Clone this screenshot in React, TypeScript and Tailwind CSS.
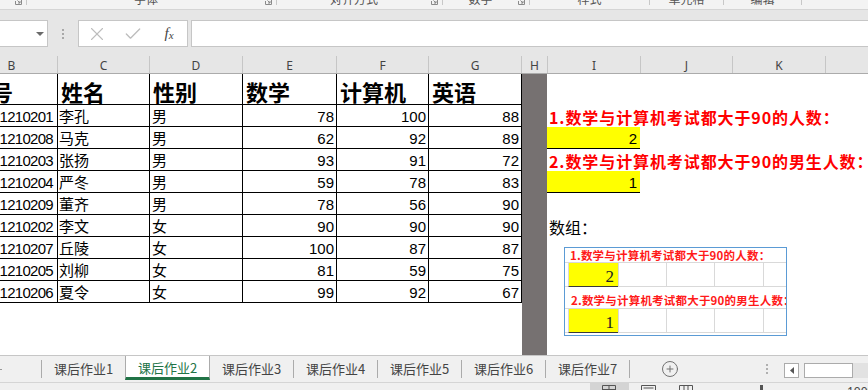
import { X, Check, CirclePlus } from 'lucide-react';

const rows: [string, string, string, number, number, number][] = [
  ['1210201', '李孔', '男', 78, 100, 88],
  ['1210208', '马克', '男', 62, 92, 89],
  ['1210203', '张扬', '男', 93, 91, 72],
  ['1210204', '严冬', '男', 59, 78, 83],
  ['1210209', '董齐', '男', 78, 56, 90],
  ['1210202', '李文', '女', 90, 90, 90],
  ['1210207', '丘陵', '女', 100, 87, 87],
  ['1210205', '刘柳', '女', 81, 59, 75],
  ['1210206', '夏令', '女', 99, 92, 67],
];

function Launcher() {
  return (
    <svg width="7" height="7" viewBox="0 0 7 7" className="flex-none -mt-[2px] mr-[4px]">
      <path d="M0.5 3V6.5H6.5V0.5H3" stroke="#8a8a8a" fill="none" />
      <path d="M2.5 2.5L5 5M5 3V5H3" stroke="#8a8a8a" fill="none" />
    </svg>
  );
}

function RSep() {
  return <div className="flex-none w-px h-[5px] bg-[#c8c8c8]" />;
}

function RSeg({ cls, label, launcher }: { cls: string; label?: string; launcher?: boolean }) {
  return (
    <div className={`flex-none flex items-start ${cls}`}>
      <div className="flex-1 text-center -mt-[7px] leading-[12px] text-[12px] text-[#555] whitespace-nowrap">{label ?? ''}</div>
      {launcher ? <Launcher /> : null}
    </div>
  );
}

function Ribbon() {
  return (
    <div className="h-[10px] flex-none bg-[#f3f3f3] border-b border-[#d5d5d5] flex items-start overflow-hidden">
      <RSeg cls="w-[26px]" launcher />
      <RSep />
      <RSeg cls="w-[249px]" label="字体" launcher />
      <RSep />
      <RSeg cls="w-[165px]" label="对齐方式" launcher />
      <RSep />
      <RSeg cls="w-[86px]" label="数字" launcher />
      <RSep />
      <RSeg cls="w-[119px]" label="样式" />
      <RSep />
      <RSeg cls="w-[73px]" label="单元格" />
      <RSep />
      <RSeg cls="w-[77px]" label="编辑" />
      <RSep />
    </div>
  );
}

function FormulaBar() {
  return (
    <div className="h-[46px] flex-none bg-[#e6e6e6] pt-[10px]">
      <div className="h-[27px] flex">
        <div className="flex-none w-[48px] bg-white border border-l-0 border-[#c6c6c6] flex items-center justify-end pr-[3px]">
          <svg width="8" height="4" viewBox="0 0 8 4">
            <path d="M0 0H8L4 4Z" fill="#6a6a6a" />
          </svg>
        </div>
        <div className="flex-none w-[30px] flex flex-col items-center justify-center gap-[2px]">
          <div className="w-[2px] h-[2px] bg-[#a8a8a8]" />
          <div className="w-[2px] h-[2px] bg-[#a8a8a8]" />
          <div className="w-[2px] h-[2px] bg-[#a8a8a8]" />
        </div>
        <div className="flex-none w-[110px] bg-white border border-[#c6c6c6] flex items-center">
          <div className="w-[36px] flex justify-center">
            <X size={22} strokeWidth={1.2} color="#bdbdbd" />
          </div>
          <div className="w-[36px] flex justify-center">
            <Check size={20} strokeWidth={1.6} color="#bdbdbd" />
          </div>
          <div className="w-[36px] flex justify-center font-['Liberation_Serif',serif] italic text-[15px] text-[#444] leading-none">
            <span>f</span>
            <span className="text-[11px] mt-[4px]">x</span>
          </div>
        </div>
        <div className="flex-none w-[3px]" />
        <div className="flex-1 bg-white border border-r-0 border-[#c6c6c6]" />
      </div>
    </div>
  );
}

function CH({ cls, l }: { cls: string; l: string }) {
  return (
    <div className={`flex-none h-full border-r border-[#c6c6c6] flex items-center justify-center pt-[2px] leading-none ${cls}`}>
      {l}
    </div>
  );
}

function ColumnHeaders() {
  return (
    <div className="h-[18px] flex-none bg-[#e6e6e6] border-b border-[#ababab] flex overflow-hidden text-[12px] text-[#444] font-['Noto_Sans',sans-serif]">
      <CH cls="w-[92px] -ml-[34px]" l="B" />
      <CH cls="w-[92px]" l="C" />
      <CH cls="w-[93px]" l="D" />
      <CH cls="w-[94px]" l="E" />
      <CH cls="w-[92px]" l="F" />
      <CH cls="w-[93px]" l="G" />
      <CH cls="w-[26px]" l="H" />
      <CH cls="w-[93px]" l="I" />
      <CH cls="w-[92px]" l="J" />
      <CH cls="w-[93px]" l="K" />
      <div className="flex-1" />
    </div>
  );
}

function HeadCell({ cls, t }: { cls: string; t: string }) {
  return (
    <div className={`flex-none h-[31px] border-r border-b border-black flex items-end pl-[3px] text-[22px] font-bold leading-[26px] whitespace-nowrap overflow-hidden ${cls}`}>
      {t}
    </div>
  );
}

function TextCell({ cls, t }: { cls: string; t: string }) {
  return (
    <div className={`flex-none h-[22px] border-r border-b border-black flex items-end pl-[1px] text-[15px] leading-[20px] whitespace-nowrap overflow-hidden ${cls}`}>
      {t}
    </div>
  );
}

function NumCell({ cls, t }: { cls: string; t: string | number }) {
  return (
    <div className={`flex-none h-[22px] border-r border-b border-black flex items-end justify-end pr-[2px] font-['Liberation_Sans',sans-serif] text-[15px] leading-[18px] whitespace-nowrap overflow-hidden ${cls}`}>
      {t}
    </div>
  );
}

function DataTable() {
  return (
    <div className="flex-none w-[522px] flex flex-col overflow-hidden">
      <div className="flex">
        <HeadCell cls="w-[92px] -ml-[34px]" t="学号" />
        <HeadCell cls="w-[92px]" t="姓名" />
        <HeadCell cls="w-[93px]" t="性别" />
        <HeadCell cls="w-[94px]" t="数学" />
        <HeadCell cls="w-[92px]" t="计算机" />
        <HeadCell cls="w-[93px]" t="英语" />
      </div>
      {rows.map((r) => (
        <div className="flex" key={r[0]}>
          <NumCell cls="w-[92px] -ml-[34px] pr-[4px] tracking-[-0.7px]" t={r[0]} />
          <TextCell cls="w-[92px]" t={r[1]} />
          <TextCell cls="w-[93px] pl-[2px]" t={r[2]} />
          <NumCell cls="w-[94px]" t={r[3]} />
          <NumCell cls="w-[92px]" t={r[4]} />
          <NumCell cls="w-[93px]" t={r[5]} />
        </div>
      ))}
    </div>
  );
}

function RedLabel({ t }: { t: string }) {
  return (
    <div className="h-[22px] flex items-end pl-[2px] text-[16px] font-bold text-[#ff0000] leading-[20px] tracking-[0.9px] whitespace-nowrap">
      {t}
    </div>
  );
}

function YellowCell({ v }: { v: string }) {
  return (
    <div className="h-[22px] flex">
      <div className="flex-none w-[93px] h-[22px] bg-[#ffff00] border-b border-black flex items-end justify-end pr-[3px] font-['Liberation_Sans',sans-serif] text-[15px] leading-[18px]">
        {v}
      </div>
    </div>
  );
}

function PicValueRow({ v }: { v: string }) {
  return (
    <div className="h-[25px] flex border-t border-[#d9d9d9]">
      <div className="flex-none w-[3px] border-b border-[#d9d9d9]" />
      <div className="flex-none w-[50px] bg-[#ffff00] border-l border-l-[#d9d9d9] border-b border-b-[#3a3a3a] flex items-end justify-end pr-[4px] font-['Liberation_Serif',serif] text-[17px] leading-[18px] text-[#222]">
        {v}
      </div>
      <div className="flex-none w-[48px] border-l border-b border-[#d9d9d9]" />
      <div className="flex-none w-[48px] border-l border-b border-[#d9d9d9]" />
      <div className="flex-none w-[49px] border-l border-b border-[#d9d9d9]" />
      <div className="flex-1 border-l border-b border-[#d9d9d9]" />
    </div>
  );
}

function Picture() {
  return (
    <div className="ml-[17px] mt-[10px] w-[223px] h-[89px] flex-none border border-[#5b9bd5] bg-white flex flex-col overflow-hidden">
      <div className="h-[14px] flex-none pl-[5px] pt-[1px] text-[11.5px] font-bold text-[#ff1a1a] leading-[13px] tracking-[0.2px] whitespace-nowrap">
        1.数学与计算机考试都大于90的人数：
      </div>
      <PicValueRow v="2" />
      <div className="h-[21px] flex-none flex items-end pl-[6px] pb-[1px] text-[11.5px] font-bold text-[#ff1a1a] leading-[13px] tracking-[0.2px] whitespace-nowrap">
        2.数学与计算机考试都大于90的男生人数：
      </div>
      <PicValueRow v="1" />
    </div>
  );
}

function RightArea() {
  return (
    <div className="flex-1 flex flex-col overflow-hidden">
      <div className="h-[31px] flex-none" />
      <RedLabel t="1.数学与计算机考试都大于90的人数：" />
      <YellowCell v="2" />
      <RedLabel t="2.数学与计算机考试都大于90的男生人数：" />
      <YellowCell v="1" />
      <div className="h-[22px] flex-none" />
      <div className="h-[22px] flex-none flex items-end pl-[2px] text-[16px] leading-[20px]">数组：</div>
      <Picture />
    </div>
  );
}

function SheetBody() {
  return (
    <div className="h-[281px] flex-none flex bg-white overflow-hidden">
      <DataTable />
      <div className="flex-none w-[25px] bg-[#767171]" />
      <RightArea />
    </div>
  );
}

function TabSep() {
  return <div className="flex-none w-px h-[18px] mt-[4px] bg-[#ababab]" />;
}

function Tab({ label }: { label: string }) {
  return (
    <div className="flex-none w-[83px] h-[24px] flex items-center justify-center text-[13px] text-[#444] leading-none">
      {label}
    </div>
  );
}

function TabBar() {
  return (
    <div className="h-[27px] flex-none border-t border-[#c6c6c6] bg-[#f0f0f0] flex items-start">
      <div className="flex-none w-[41px] h-[24px] flex items-center">
        <div className="w-[2px] h-[1px] bg-[#999] mt-[2px]" />
      </div>
      <TabSep />
      <Tab label="课后作业1" />
      <div className="flex-none w-[85px] h-[24px] bg-white border-x border-[#ababab] border-b-[3px] border-b-[#217346] flex items-center justify-center pt-[1px] text-[13px] text-[#217346] leading-none">
        课后作业2
      </div>
      <Tab label="课后作业3" />
      <TabSep />
      <Tab label="课后作业4" />
      <TabSep />
      <Tab label="课后作业5" />
      <TabSep />
      <Tab label="课后作业6" />
      <TabSep />
      <Tab label="课后作业7" />
      <TabSep />
      <div className="flex-none w-[31px]" />
      <div className="flex-none w-[18px] h-[18px] mt-[4px]">
        <CirclePlus size={18} strokeWidth={1.3} color="#6f6f6f" />
      </div>
      <div className="flex-none w-[87px]" />
      <div className="flex-none w-[2px] mt-[8px] flex flex-col gap-[2px]">
        <div className="w-[2px] h-[2px] bg-[#b0b0b0]" />
        <div className="w-[2px] h-[2px] bg-[#b0b0b0]" />
        <div className="w-[2px] h-[2px] bg-[#b0b0b0]" />
      </div>
      <div className="flex-none w-[16px]" />
      <div className="flex-none w-[15px] h-[15px] mt-[7px] bg-white border border-[#ababab] flex items-center justify-center">
        <svg width="4" height="7" viewBox="0 0 4 7">
          <path d="M4 0V7L0 3.5Z" fill="#555" />
        </svg>
      </div>
      <div className="flex-none w-[5px]" />
      <div className="flex-none w-[49px] h-[15px] mt-[7px] bg-white border border-[#ababab]" />
      <div className="flex-1 h-[15px] mt-[7px] bg-[#e2e2e2]" />
    </div>
  );
}

function StatusBar() {
  return (
    <div className="h-[8px] flex-none border-t border-[#d5d5d5] bg-[#f0f0f0] flex items-start overflow-hidden">
      <div className="flex-none w-[590px]" />
      <div className="flex-none w-[39px] h-[8px] bg-[#d4d4d4] pl-[12px] pt-[2px]">
        <svg width="14" height="8" viewBox="0 0 14 8">
          <path d="M0.5 8V0.5H13.5V8M7 0.5V8M0.5 4.5H13.5" stroke="#555" fill="none" />
        </svg>
      </div>
      <div className="flex-none w-[12px]" />
      <div className="flex-none w-[15px] pt-[2px]">
        <svg width="15" height="8" viewBox="0 0 15 8">
          <path d="M0.5 8V0.5H14.5V8M2.5 3H12.5" stroke="#555" fill="none" />
        </svg>
      </div>
      <div className="flex-none w-[23px]" />
      <div className="flex-none w-[14px] pt-[2px]">
        <svg width="14" height="8" viewBox="0 0 14 8">
          <path d="M0.5 8V0.5H13.5V8M5 0.5V8M9 0.5V8" stroke="#555" fill="none" />
        </svg>
      </div>
      <div className="flex-none w-[67px]" />
      <div className="flex-none w-[3px] h-[5px] mt-[2px] bg-[#555]" />
      <div className="flex-none w-[84px]" />
      <div className="flex-none text-[12px] leading-[12px] text-[#444] mt-[3px] font-['Noto_Sans',sans-serif]">100%</div>
    </div>
  );
}

export default function App() {
  return (
    <div className="w-[868px] h-[390px] overflow-hidden flex flex-col bg-white text-black font-['Noto_Sans_CJK_SC',sans-serif]">
      <Ribbon />
      <FormulaBar />
      <ColumnHeaders />
      <SheetBody />
      <TabBar />
      <StatusBar />
    </div>
  );
}
